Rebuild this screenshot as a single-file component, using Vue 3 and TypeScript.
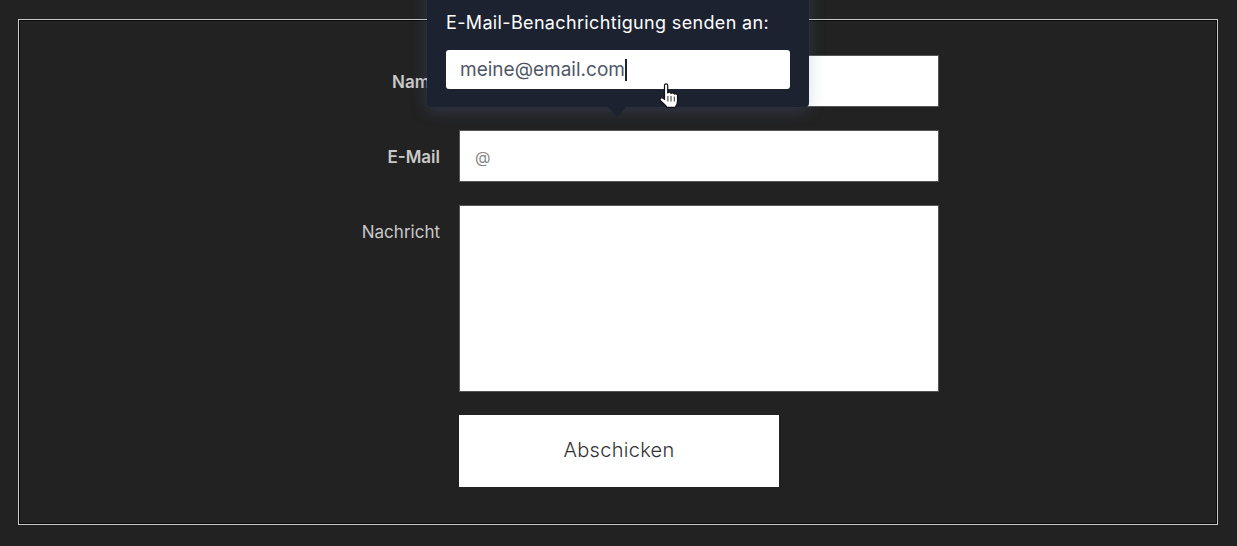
<script setup lang="ts">
const fields = [
  { label: 'Name', strong: true, kind: 'input', placeholder: '' },
  { label: 'E-Mail', strong: true, kind: 'input', placeholder: '@' },
  { label: 'Nachricht', strong: false, kind: 'area', placeholder: '' },
]
</script>

<template>
  <div class="page">
    <div class="frame">
      <form class="form" @submit.prevent>
        <template v-for="field in fields" :key="field.label">
          <label class="label" :class="{ 'label--strong': field.strong, 'label--top': field.kind === 'area' }">{{ field.label }}</label>
          <textarea v-if="field.kind === 'area'" class="control control--area"></textarea>
          <input v-else class="control" :placeholder="field.placeholder" />
        </template>
        <button class="submit" type="submit">Abschicken</button>
      </form>
    </div>

    <div class="popover">
      <div class="popover__title">E-Mail-Benachrichtigung senden an:</div>
      <div class="popover__input">meine@email.com<span class="caret"></span></div>
    </div>

    <svg class="pointer" width="22" height="27" viewBox="0 0 22 27">
      <path
        d="M6.5 2.3c0-1.9 3.2-1.9 3.2 0v7.6c.6-1 3-1 3.3.6.6-.9 3-.8 3.3.7.7-.7 3.2-.5 3.2 1.3v5.6c0 2.8-1.1 4.7-2.2 6.2H9c-1.2-1.8-3.4-3.8-6.5-6.6-1.5-1.6.8-3.8 2.6-2.5l1.4 1.2z"
        fill="#fff"
        stroke="#111"
        stroke-width="1.2"
        stroke-linejoin="round"
      />
      <path d="M9.9 13v5.5M13 13v5.5M16.3 13.5v5" stroke="#333" stroke-width="1" fill="none" />
    </svg>
  </div>
</template>

<style>
html,
body {
  margin: 0;
  background: #222;
  overflow: hidden;
}
</style>

<style scoped>
.page {
  position: relative;
  box-sizing: border-box;
  width: 1237px;
  height: 546px;
  padding: 19px 19px 21px 18px;
  background: #222;
  overflow: hidden;
  font-family: Inter, "Liberation Sans", sans-serif;
}

.frame {
  box-sizing: border-box;
  height: 506px;
  padding: 35px 0 0;
  border: 1px solid #c8c8c8;
  box-shadow: inset 1px 1px 0 #0a0a0a, inset -1px -1px 0 #0a0a0a;
}

.form {
  display: grid;
  grid-template-columns: 421px 480px 1fr;
  grid-template-rows: 52px 52px 187px 72px;
  column-gap: 19px;
  row-gap: 23px;
}

.label {
  grid-column: 1;
  align-self: center;
  padding-top: 1px;
  text-align: right;
  font-size: 17px;
  color: #c9c9c9;
}

.label--strong {
  font-weight: 600;
}

.label--top {
  align-self: start;
  padding-top: 17px;
}

.control {
  grid-column: 2;
  box-sizing: border-box;
  width: 100%;
  height: 100%;
  margin: 0;
  padding: 1px 15px 0;
  border: 1px solid #555;
  border-radius: 0;
  background: #fff;
  outline: none;
  resize: none;
  font-family: inherit;
  font-size: 16px;
}

.control::placeholder {
  color: #888;
}

.submit {
  grid-column: 2;
  width: 320px;
  height: 72px;
  padding: 0 0 3px;
  border: 0;
  background: #fff;
  color: #333;
  font-family: inherit;
  font-size: 20px;
  font-weight: 300;
  letter-spacing: 0.3px;
}

.popover {
  position: absolute;
  left: 427px;
  top: -20px;
  box-sizing: border-box;
  width: 382px;
  height: 127px;
  padding: 32px 19px 0 19px;
  border-radius: 4px;
  background: #1c2230;
  box-shadow: 0 4px 16px rgba(100, 120, 190, 0.25);
}

.popover::after {
  content: "";
  position: absolute;
  left: 181px;
  bottom: -10px;
  border-left: 9px solid transparent;
  border-right: 9px solid transparent;
  border-top: 10px solid #1c2230;
}

.popover__title {
  height: 22px;
  line-height: 22px;
  font-size: 18px;
  letter-spacing: 0.35px;
  color: #fff;
  white-space: nowrap;
}

.popover__input {
  display: flex;
  align-items: center;
  box-sizing: border-box;
  height: 39px;
  margin-top: 16px;
  padding: 0 14px;
  border-radius: 3px;
  background: #fff;
  color: #4f5668;
  font-size: 19px;
}

.caret {
  width: 2px;
  height: 22px;
  background: #1c2230;
}

.pointer {
  position: absolute;
  left: 658px;
  top: 83px;
}
</style>
